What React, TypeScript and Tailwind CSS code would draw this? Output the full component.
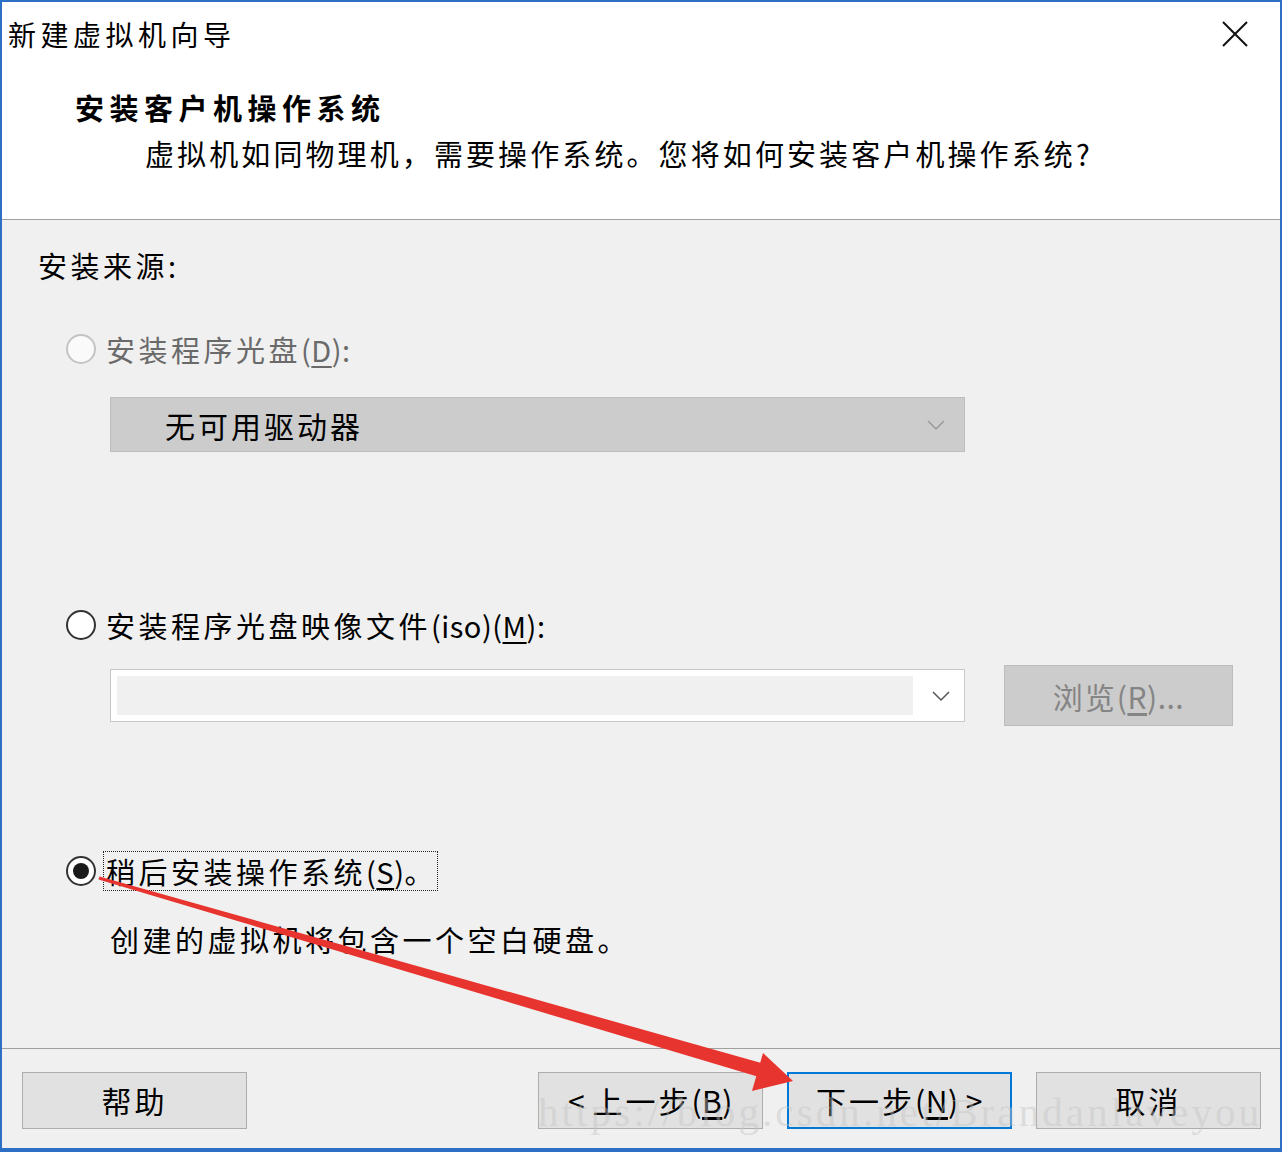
const font = "font-['Noto_Sans_CJK_SC','Noto_Sans',sans-serif]";

function L({ children }: { children: React.ReactNode }) {
  return <span className="tracking-[0.5px]">{children}</span>;
}

function U({ children }: { children: React.ReactNode }) {
  return <span className="underline underline-offset-4">{children}</span>;
}

function Radio({ state }: { state: "disabled" | "off" | "on" }) {
  if (state === "disabled") {
    return (
      <span className="w-[30px] h-[30px] rounded-full border-2 border-[#c4c4c4] bg-[#fafafa] shrink-0" />
    );
  }
  return (
    <span className="w-[30px] h-[30px] rounded-full border-2 border-[#333] bg-white shrink-0 flex items-center justify-center">
      {state === "on" && <span className="w-[16px] h-[16px] rounded-full bg-[#1a1a1a]" />}
    </span>
  );
}

function Chevron({ color }: { color: string }) {
  return (
    <svg width="20" height="12" viewBox="0 0 20 12" fill="none">
      <path d="M2 2 L10 10 L18 2" stroke={color} strokeWidth="1.5" />
    </svg>
  );
}

function Btn({ label, focused }: { label: React.ReactNode; focused?: boolean }) {
  return (
    <div
      className={`w-[225px] h-[57px] flex items-center justify-center bg-[#e1e1e1] text-[30px] tracking-[3px] text-black ${
        focused ? "border-2 border-[#0078d7]" : "border border-[#adadad]"
      }`}
    >
      {label}
    </div>
  );
}

export default function App() {
  return (
    <div
      className={`relative w-[1282px] h-[1152px] overflow-hidden flex flex-col bg-[#f0f0f0] border-2 border-b-4 border-[#2c6fc4] ${font}`}
    >
      {/* header */}
      <div className="h-[218px] bg-white border-b border-[#a0a0a0] shrink-0 pt-[12px]">
        <div className="flex items-center justify-between h-[40px] pl-[6px] pr-[32px]">
          <span className="text-[28px] tracking-[4.5px] leading-[40px] text-black">新建虚拟机向导</span>
          <svg width="26" height="26" viewBox="0 0 26 26">
            <path d="M1 1 L25 25 M25 1 L1 25" stroke="#111" strokeWidth="2" />
          </svg>
        </div>
        <div className="mt-[33px] pl-[73px] text-[29px] font-bold tracking-[5.5px] leading-[40px] text-black">
          安装客户机操作系统
        </div>
        <div className="mt-[6px] pl-[143px] text-[29px] tracking-[3.1px] leading-[40px] text-black">
          虚拟机如同物理机，需要操作系统。您将如何安装客户机操作系统<L>?</L>
        </div>
      </div>

      {/* body */}
      <div className="flex-1 pt-[25px] pl-[36px] text-[29px] tracking-[3.5px] leading-[40px] text-black">
        <div>
          安装来源<L>:</L>
        </div>

        <div className="mt-[44px] ml-[28px] flex items-center gap-[10px] h-[40px]">
          <Radio state="disabled" />
          <span className="text-[#6a6a6a]">
            安装程序光盘
            <L>
              (<U>D</U>):
            </L>
          </span>
        </div>

        <div className="mt-[28px] ml-[72px] w-[855px] h-[55px] bg-[#cccccc] border border-[#bdbdbd] flex items-center justify-between pl-[54px] pr-[18px]">
          <span className="text-[30px] tracking-[3px]">无可用驱动器</span>
          <Chevron color="#9a9a9a" />
        </div>

        <div className="mt-[153px] ml-[28px] flex items-center gap-[10px] h-[40px]">
          <Radio state="off" />
          <span>
            安装程序光盘映像文件
            <L>
              (iso)(<U>M</U>):
            </L>
          </span>
        </div>

        <div className="mt-[20px] flex items-center h-[61px]">
          <div className="ml-[72px] w-[855px] h-[53px] bg-white border border-[#c8c8c8] flex items-center p-[6px] gap-[18px]">
            <div className="w-[796px] h-full bg-[#f0f0f0]" />
            <Chevron color="#555" />
          </div>
          <div className="ml-[39px] w-[229px] h-[61px] bg-[#cccccc] border border-[#bdbdbd] flex items-center justify-center text-[#858585] text-[30px] tracking-[2px]">
            浏览
            <L>
              (<U>R</U>)...
            </L>
          </div>
        </div>

        <div className="mt-[125px] ml-[28px] flex items-center gap-[7px] h-[40px]">
          <Radio state="on" />
          <span className="border border-dotted border-[#222] pl-[2px] pr-[0px] leading-[38px]">
            稍后安装操作系统
            <L>
              (<U>S</U>)
            </L>
            。
          </span>
        </div>

        <div className="mt-[28px] ml-[72px]">创建的虚拟机将包含一个空白硬盘。</div>
      </div>

      {/* footer */}
      <div className="h-[100px] shrink-0 border-t border-[#a0a0a0] pt-[23px] pl-[20px] pr-[19px] flex items-start">
        <Btn label="帮助" />
        <div className="ml-auto flex gap-[24px]">
          <Btn
            label={
              <span>
                <L>&lt; </L>上一步
                <L>
                  (<U>B</U>)
                </L>
              </span>
            }
          />
          <Btn
            focused
            label={
              <span>
                下一步
                <L>
                  (<U>N</U>) &gt;
                </L>
              </span>
            }
          />
          <Btn label="取消" />
        </div>
      </div>

      {/* watermark */}
      <div className="absolute left-[536px] top-[1080px] pointer-events-none font-['Liberation_Serif',serif] text-[41px] tracking-[3.1px] text-[#c4c4c4]/45 whitespace-nowrap">
        https://blog.csdn.net/Brandanlaveyou
      </div>

      {/* red arrow annotation */}
      <svg className="absolute left-0 top-0 pointer-events-none" width="1282" height="1152" viewBox="0 0 1282 1152">
        <polygon points="97.5,874.5 96.5,877.5 762.8,1076.8 767.2,1063.2" fill="#e8342f" />
        <polygon points="761,1051 791,1079 750,1089" fill="#e8342f" />
      </svg>
    </div>
  );
}
